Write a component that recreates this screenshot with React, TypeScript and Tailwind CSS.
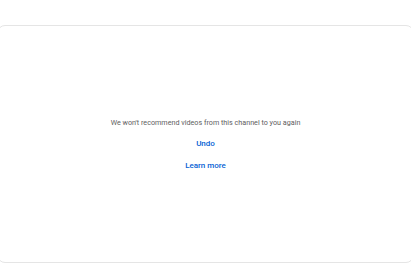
export default function App() {
  return (
    <div className="h-[266px] w-[411px] overflow-hidden bg-white pt-[25px] pb-[3px] font-['Roboto',sans-serif]">
      <div className="-mx-[3px] flex h-full flex-col items-center justify-center rounded-lg border border-[#e5e5e5]">
        <p className="text-[7.2px] leading-[10px] text-[#606060]">
          We won't recommend videos from this channel to you again
        </p>
        <button className="mt-[11px] text-[8px] font-medium leading-[10px] text-[#065fd4]">Undo</button>
        <button className="mt-[12px] text-[8px] font-medium leading-[10px] text-[#065fd4]">Learn more</button>
      </div>
    </div>
  );
}
